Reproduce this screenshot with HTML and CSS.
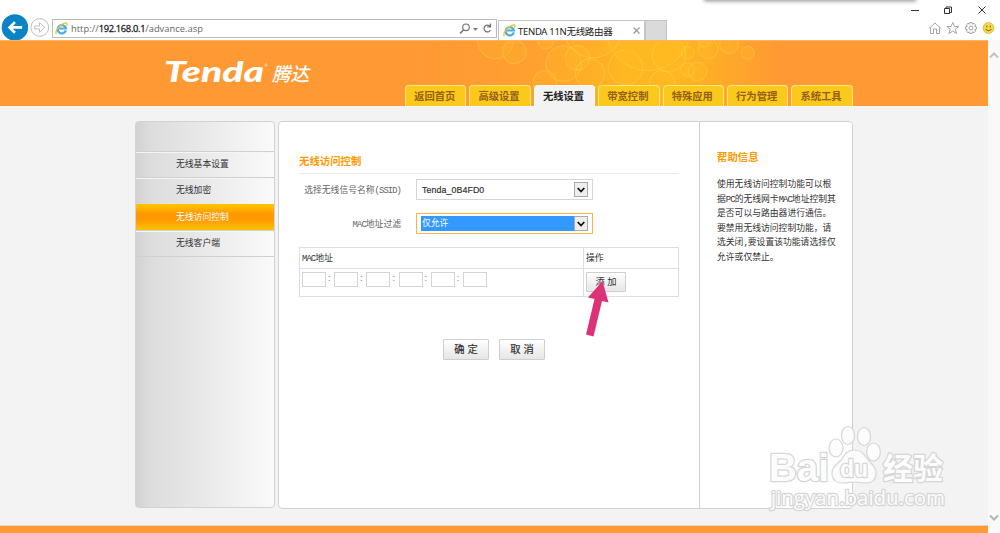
FILE: index.html
```html
<!DOCTYPE html>
<html lang="zh-CN">
<head>
  <meta charset="UTF-8">
  <title>TENDA 11N无线路由器</title>
  <link rel="stylesheet" href="styles.css">
</head>
<body>

  <!-- Browser bar -->
  <div class="browser">
    <div class="top-shadow"></div>
    <svg class="nav-buttons" width="52" height="28" viewBox="0 0 52 28">
      <circle cx="14.5" cy="15" r="13.7" fill="#0a84c4"/>
      <path d="M22 15H9M14.5 9.5L9 15l5.500 5.500" fill="none" stroke="#fff" stroke-width="2.800"/>
      <circle cx="40.300" cy="15" r="9.200" fill="#fff" stroke="#bbb"/>
      <path d="M35 13.500h5v-3.500l5.500 5-5.500 5v-3.500h-5z" fill="#fff" stroke="#b5b5b5" stroke-width=".9"/>
    </svg>
    <div class="address">
      <svg class="ie" viewBox="0 0 14 14"><path d="M11.700 9A4.500 4.500 0 1 1 11.800 7H3.500" fill="none" stroke="#4aaee0" stroke-width="2.400"/><path d="M1.500 13C-1 10 6 1.500 12 1c1.500.2 1 2 .3 3" fill="none" stroke="#efc12f" stroke-width="1.400"/></svg>
      <span class="url">http://<b>192.168.0.1</b>/advance.asp</span>
      <svg class="address-tools" width="34" height="14" viewBox="0 0 34 14">
        <circle cx="7" cy="5.300" r="3.300" fill="none" stroke="#777" stroke-width="1.200"/>
        <path d="M4.700 7.800L1 11.500" stroke="#777" stroke-width="1.600"/>
        <path d="M14 6h5l-2.500 2.700z" fill="#777"/>
        <path d="M31 4.300A3.400 3.400 0 1 0 31.500 8M31.500 1.500v3.300h-3.300" fill="none" stroke="#777" stroke-width="1.300"/>
      </svg>
    </div>
    <div class="browser-tab">
      <svg class="ie" viewBox="0 0 14 14"><path d="M11.700 9A4.500 4.500 0 1 1 11.800 7H3.500" fill="none" stroke="#4aaee0" stroke-width="2.400"/><path d="M1.500 13C-1 10 6 1.500 12 1c1.500.2 1 2 .3 3" fill="none" stroke="#efc12f" stroke-width="1.400"/></svg>
      <span class="tab-title">TENDA 11N无线路由器</span>
      <svg class="tab-close" width="7" height="7" viewBox="0 0 7 7"><path d="M.5.5l6 6M6.500.5l-6 6" stroke="#999" stroke-width="1.200"/></svg>
    </div>
    <div class="new-tab"></div>
    <svg class="window-tools" width="94" height="40" viewBox="0 0 94 40">
      <g fill="none" stroke="#333">
        <path d="M5 10.500h8"/>
        <path d="M38.500 8.500h5v5h-5zM40 8.500v-1.500h5.500v5.500H44"/>
        <path d="M72.500 6.500l7 7M79.500 6.500l-7 7"/>
      </g>
      <g fill="none" stroke="#999" stroke-width=".9">
        <path d="M23 28.500l6-5.500 6 5.500M24.500 28v5.500h3v-4.500h3v4.500h3V28"/>
        <path d="M46.800 22.500l1.700 4h4.200l-3.400 2.700 1.300 4.300-3.800-2.500-3.800 2.500 1.300-4.300-3.400-2.700h4.200z"/>
        <circle cx="65" cy="28" r="1.900"/>
        <path d="M63.900 22.500h2.200l.4 1.700 1.500-.9 1.600 1.600-.9 1.500 1.700.5v2.200l-1.700.5.9 1.500-1.600 1.600-1.500-.9-.4 1.700h-2.200l-.4-1.700-1.500.9-1.600-1.600.9-1.500-1.700-.5v-2.200l1.700-.5-.9-1.500 1.600-1.600 1.500.9z"/>
      </g>
      <circle cx="82.500" cy="28" r="5.400" fill="#fbd944" stroke="#c5a53c" stroke-width=".7"/>
      <path d="M80.800 25.500v2M84.200 25.500v2M79.500 29.300q3 3 6 0" fill="none" stroke="#665020" stroke-width=".9"/>
    </svg>
  </div>

  <div class="viewport">
    <div class="page">
      <div class="header">
        <svg class="bubbles" width="400" height="66" viewBox="0 0 400 66">
          <defs>
            <linearGradient id="glow">
              <stop offset="0" stop-color="#ffb91f" stop-opacity="0"/>
              <stop offset=".25" stop-color="#ffb91f" stop-opacity=".12"/>
              <stop offset=".42" stop-color="#ffb91f" stop-opacity=".4"/>
              <stop offset=".58" stop-color="#ffb91f" stop-opacity=".9"/>
              <stop offset=".7" stop-color="#ffb91f" stop-opacity=".9"/>
              <stop offset=".96" stop-color="#ffb91f" stop-opacity="0"/>
            </linearGradient>
          </defs>
          <rect width="400" height="66" fill="url(#glow)"/>
          <g fill="#ffc928" fill-opacity=".16" stroke="#ffd84a" stroke-opacity=".45">
            <circle cx="94" cy="0" r="18"/><circle cx="113" cy="11" r="12"/>
            <circle cx="145" cy="0" r="8"/><circle cx="163" cy="23" r="18"/>
            <circle cx="177" cy="17" r="12.500"/><circle cx="144" cy="42" r="12"/>
            <circle cx="193" cy="-13" r="30"/><circle cx="190" cy="33" r="15"/>
            <circle cx="226" cy="27" r="17.500"/><circle cx="249" cy="-13" r="43"/>
            <circle cx="270" cy="14" r="17"/><circle cx="263" cy="43" r="13"/>
            <circle cx="289" cy="12" r="6.500"/><circle cx="289" cy="29" r="7"/>
            <circle cx="299" cy="31" r="9.500"/><circle cx="310" cy="8" r="10"/>
            <circle cx="331" cy="3" r="9.500"/><circle cx="350" cy="12" r="6.500"/>
            <circle cx="306" cy="0" r="6"/>
          </g>
        </svg>
        <svg class="logo" width="150" height="34" viewBox="0 0 150 34">
          <text class="logo-name" x="1" y="25" textLength="100" lengthAdjust="spacingAndGlyphs">Tenda</text>
          <circle cx="103" cy="8" r="1.200" fill="none" stroke="#fff" stroke-width=".5"/>
          <text class="logo-cn" x="109" y="24" textLength="37" lengthAdjust="spacingAndGlyphs">腾达</text>
        </svg>
        <div class="tabs">
          <div class="tab">返回首页</div>
          <div class="tab">高级设置</div>
          <div class="tab active">无线设置</div>
          <div class="tab">带宽控制</div>
          <div class="tab">特殊应用</div>
          <div class="tab">行为管理</div>
          <div class="tab">系统工具</div>
        </div>
      </div>

      <div class="content">
        <div class="sidebar">
          <div class="menu-item">无线基本设置</div>
          <div class="menu-item">无线加密</div>
          <div class="menu-item active">无线访问控制</div>
          <div class="menu-item">无线客户端</div>
        </div>

        <div class="panel">
          <div class="main">
            <h1>无线访问控制</h1>
            <div class="form-row ssid">
              <label>选择无线信号名称<span class="half">(SSID)</span></label>
              <div class="select"><span class="value latin">Tenda_0B4FD0</span><span class="arrow"><svg width="8" height="6" viewBox="0 0 8 6"><path d="M.7 1L4 4.500 7.300 1" fill="none" stroke="#111" stroke-width="1.800"/></svg></span></div>
            </div>
            <div class="form-row">
              <label><span class="half">MAC</span>地址过滤</label>
              <div class="select focus"><span class="value">仅允许</span><span class="arrow"><svg width="8" height="6" viewBox="0 0 8 6"><path d="M.7 1L4 4.500 7.300 1" fill="none" stroke="#111" stroke-width="1.800"/></svg></span></div>
            </div>

            <table class="mac-table">
              <tr>
                <td class="mac-col"><span class="half">MAC</span>地址</td>
                <td>操作</td>
              </tr>
              <tr class="mac-row">
                <td>
                  <div class="mac-inputs">
                    <i></i><b>:</b><i></i><b>:</b><i></i><b>:</b><i></i><b>:</b><i></i><b>:</b><i></i>
                  </div>
                </td>
                <td><div class="btn add">添 加</div></td>
              </tr>
            </table>

            <div class="buttons">
              <div class="btn">确 定</div>
              <div class="btn">取 消</div>
            </div>
          </div>

          <div class="help">
            <h2>帮助信息</h2>
            <p>使用无线访问控制功能可以根<br>据<span class="half">PC</span>的无线网卡<span class="half">MAC</span>地址控制其<br>是否可以与路由器进行通信。<br>要禁用无线访问控制功能，请<br>选关闭<span class="half">,</span>要设置该功能请选择仅<br>允许或仅禁止。</p>
          </div>
        </div>
      </div>
      <div class="footer"></div>
    </div>

    <div class="scrollbar">
      <svg width="10" height="7" viewBox="0 0 10 7"><path d="M1 5.500L5 1.500l4 4" fill="none" stroke="#c2c2c2" stroke-width="2"/></svg>
      <svg width="10" height="7" viewBox="0 0 10 7"><path d="M1 1.500l4 4 4-4" fill="none" stroke="#b5b5b5" stroke-width="2"/></svg>
    </div>
  </div>

  <!-- Arrow pointing at the add button -->
  <svg class="pointer" width="24" height="56" viewBox="0 0 24 56">
    <path d="M17.500 0L23.500 21.500 17 20 8.500 55.500 1 53.500 9.500 18 3 16.500z" fill="#de3277"/>
  </svg>

  <!-- Watermark -->
  <svg class="watermark" width="190" height="92" viewBox="0 0 190 92">
    <g class="mark">
      <text class="mark-bai" x="8" y="61" textLength="60" lengthAdjust="spacingAndGlyphs">Bai</text>
      <ellipse cx="75" cy="28" rx="7" ry="9"/>
      <ellipse cx="87" cy="15.500" rx="6.500" ry="9"/>
      <ellipse cx="103" cy="16.500" rx="6.500" ry="9"/>
      <ellipse cx="112.500" cy="32" rx="6.800" ry="9"/>
      <path d="M93 30c-8 0-10 7-14 11s-9 7-8 14 6 8 11 8 8-1 12-1 7 1 11 1c5 0 9-2 10-8s-3-10-7-14-6-11-15-11z"/>
      <text class="mark-du" x="79" y="57" textLength="28" lengthAdjust="spacingAndGlyphs">du</text>
      <text class="mark-cn" x="122" y="59" textLength="60" lengthAdjust="spacingAndGlyphs">经验</text>
      <text class="mark-url" x="10" y="85" textLength="174" lengthAdjust="spacingAndGlyphs">jingyan.baidu.com</text>
    </g>
  </svg>

</body>
</html>
```
FILE: styles.css
```css
* {
  box-sizing: border-box;
}

body {
  margin: 0;
  width: 1000px;
  height: 533px;
  overflow: hidden;
  position: relative;
  background: #fff;
  font-family: "Liberation Sans", "Noto Sans CJK SC", sans-serif;
  font-size: 8.8px;
  color: #333;
}

svg {
  display: block;
  flex: none;
  overflow: visible;
}

.browser {
  height: 40px;
  display: flex;
  align-items: flex-end;
  position: relative;
}

.top-shadow {
  position: absolute;
  left: 705px;
  top: -3px;
  width: 210px;
  height: 3px;
  box-shadow: 0 0 4px 1px #888;
}

.nav-buttons {
  height: 27px;
  overflow: hidden;
}

.address {
  width: 445px;
  height: 19px;
  margin-bottom: 2px;
  border: 1px solid #bcbcbc;
  display: flex;
  align-items: center;
  padding: 0 3px 0 2px;
}

.ie {
  width: 13px;
  height: 13px;
}

.url {
  font: 9.3px "Open Sans", sans-serif;
  letter-spacing: 0.05px;
  color: #666;
  margin-left: 3px;
  flex: 1;
}

.url b {
  color: #222;
  font-weight: normal;
  letter-spacing: -0.3px;
  -webkit-text-stroke: 0.3px #222;
}

.browser-tab {
  width: 147px;
  height: 20px;
  margin-left: 1px;
  border: 1px solid #c4c4c4;
  border-bottom: 0;
  display: flex;
  align-items: center;
  padding: 0 4px 0 4px;
}

.tab-title {
  font: 9.5px "Noto Sans", "Noto Sans CJK SC", sans-serif;
  letter-spacing: -0.3px;
  color: #222;
  margin-left: 2px;
  flex: 1;
  white-space: nowrap;
}

.new-tab {
  width: 22px;
  height: 20px;
  background: #dadada;
  border: 1px solid #c4c4c4;
  border-bottom: 0;
}

.window-tools {
  margin-left: auto;
}

.viewport {
  display: flex;
  height: 493px;
}

.page {
  width: 988px;
  background: #f3f3f3;
  display: flex;
  flex-direction: column;
}

.header {
  height: 66px;
  background: #ff9934;
  border-top: 1px solid #ffb168;
  display: flex;
  position: relative;
}

.bubbles {
  position: absolute;
  left: 400px;
  top: 0;
  height: 65px;
  overflow: hidden;
}

.logo {
  margin: 16px 92px 0 163px;
  fill: #fff;
}

.logo-name {
  font: italic 900 29px Lato, sans-serif;
}

.logo-cn {
  font: italic 500 19px "Noto Sans CJK SC", sans-serif;
}

.tabs {
  display: flex;
  gap: 3px;
  align-self: flex-end;
  position: relative;
}

.tab {
  width: 61.4px;
  height: 21px;
  background: #fbc91b;
  border: 1px solid #ffe680;
  border-bottom: 0;
  border-radius: 4px 4px 0 0;
  color: #94601a;
  font-size: 10.3px;
  font-weight: bold;
  line-height: 21px;
  text-align: center;
  padding-right: 2px;
}

.tab.active {
  background: #f3f3f3;
  border-color: #fff;
  color: #222;
}

.content {
  flex: 1;
  display: flex;
  align-items: flex-start;
  gap: 3px;
  padding: 15px 0 0 135px;
}

.sidebar {
  width: 140px;
  height: 387px;
  padding-top: 29px;
  border: 1px solid #d2d2d2;
  border-radius: 4px;
  background: linear-gradient(to right, #d2d2d2, #dcdcdc 10%, #fafafa);
}

.menu-item {
  height: 26.4px;
  padding-left: 40px;
  border-top: 1px solid #d0d0d0;
  box-shadow: inset 0 1px #f5f5f5;
  line-height: 25px;
}

.menu-item:last-child {
  border-bottom: 1px solid #d0d0d0;
}

.menu-item.active {
  border-color: #ffc000;
  background: linear-gradient(#ffc400, #ff9900 35%, #ff9900 60%, #ffc400);
  box-shadow: none;
  color: #fff;
}

.panel {
  width: 575px;
  height: 388px;
  display: flex;
  background: #fff;
  border: 1px solid #d2d2d2;
  border-radius: 4px;
}

.main {
  width: 421px;
  padding: 32px 20px 0 20px;
  border-right: 1px solid #d2d2d2;
}

h1,
h2 {
  margin: 0;
  font-size: 10.4px;
  line-height: 15px;
  color: #ff9900;
}

h1 {
  height: 20px;
  border-bottom: 1px solid #e9e9e9;
}

.form-row {
  display: flex;
  height: 21px;
  align-items: center;
  margin-top: 13px;
  color: #666;
}

.form-row.ssid {
  margin-top: 5px;
}

.form-row label {
  width: 102px;
  margin-right: 15px;
  text-align: right;
  white-space: nowrap;
}

.half {
  font-family: "Liberation Mono", monospace;
  font-size: 8.8px;
  letter-spacing: -0.88px;
}

.select {
  width: 177px;
  height: 21px;
  padding: 2px 4px;
  border: 1px solid #d5d5d5;
  display: flex;
}

.select.focus {
  border-color: #ffb347;
}

.value {
  flex: 1;
  line-height: 15px;
  padding-left: 1px;
}

.value.latin {
  font-size: 8.8px;
  color: #333;
  letter-spacing: 0.1px;
  line-height: 16px;
  -webkit-text-stroke: 0.2px #333;
}

.focus .value {
  background: #3399ff;
  color: #fff;
}

.arrow {
  width: 14px;
  height: 15px;
  border: 1px solid #aaa;
  background: #eee;
  display: flex;
  align-items: center;
  justify-content: center;
}

.mac-table {
  width: 380px;
  margin-top: 13px;
  border-collapse: collapse;
  table-layout: fixed;
}

.mac-table td {
  height: 21px;
  padding: 0 2px 2px;
  border: 1px solid #dedede;
}

.mac-table .mac-col {
  width: 284px;
}

.mac-table .mac-row td {
  height: 28px;
  vertical-align: top;
  padding-top: 3px;
}

.mac-inputs {
  display: flex;
}

.mac-inputs i {
  width: 24px;
  height: 15px;
  border: 1px solid #d5d5d5;
}

.mac-inputs b {
  width: 8.2px;
  padding-left: 2px;
  font-weight: normal;
  color: #777;
  line-height: 12px;
}

.btn {
  width: 46px;
  height: 21px;
  border: 1px solid #cfcfcf;
  border-radius: 1px;
  background: linear-gradient(#fff, #e6e6e6);
  font-size: 10.3px;
  line-height: 19px;
  text-align: center;
  -webkit-text-stroke: 0.2px #333;
}

.btn.add {
  width: 40px;
  height: 20px;
  font-size: 9.3px;
  -webkit-text-stroke: 0;
}

.buttons {
  display: flex;
  gap: 10px;
  margin: 42px 0 0 144px;
}

.help {
  padding: 28px 0 0 17px;
}

.help p {
  margin: 12px 0 0;
  line-height: 14.6px;
  white-space: nowrap;
}

.help p .half {
  line-height: 1;
}

.footer {
  height: 8px;
  background: #ff9934;
  border-top: 1px solid #e0d5c8;
}

.scrollbar {
  width: 12px;
  padding: 12px 1px;
  background: #f9f9f9;
  display: flex;
  flex-direction: column;
  justify-content: space-between;
}

.pointer {
  position: absolute;
  left: 585px;
  top: 281px;
}

.watermark {
  position: absolute;
  left: 761px;
  top: 420px;
}

.mark {
  fill: #fcfcfc;
  stroke: #d6d6d6;
  stroke-width: 1.2;
  stroke-linejoin: round;
}

.mark text {
  paint-order: stroke;
  stroke-width: 2.6;
}

.mark-bai {
  font: bold 39px "Liberation Sans", sans-serif;
}

.mark-du {
  font: bold 24px "Liberation Sans", sans-serif;
}

.mark-cn {
  font: bold 30px "Noto Sans CJK SC", sans-serif;
}

.mark-url {
  font: 20px "Open Sans", sans-serif;
}
```
